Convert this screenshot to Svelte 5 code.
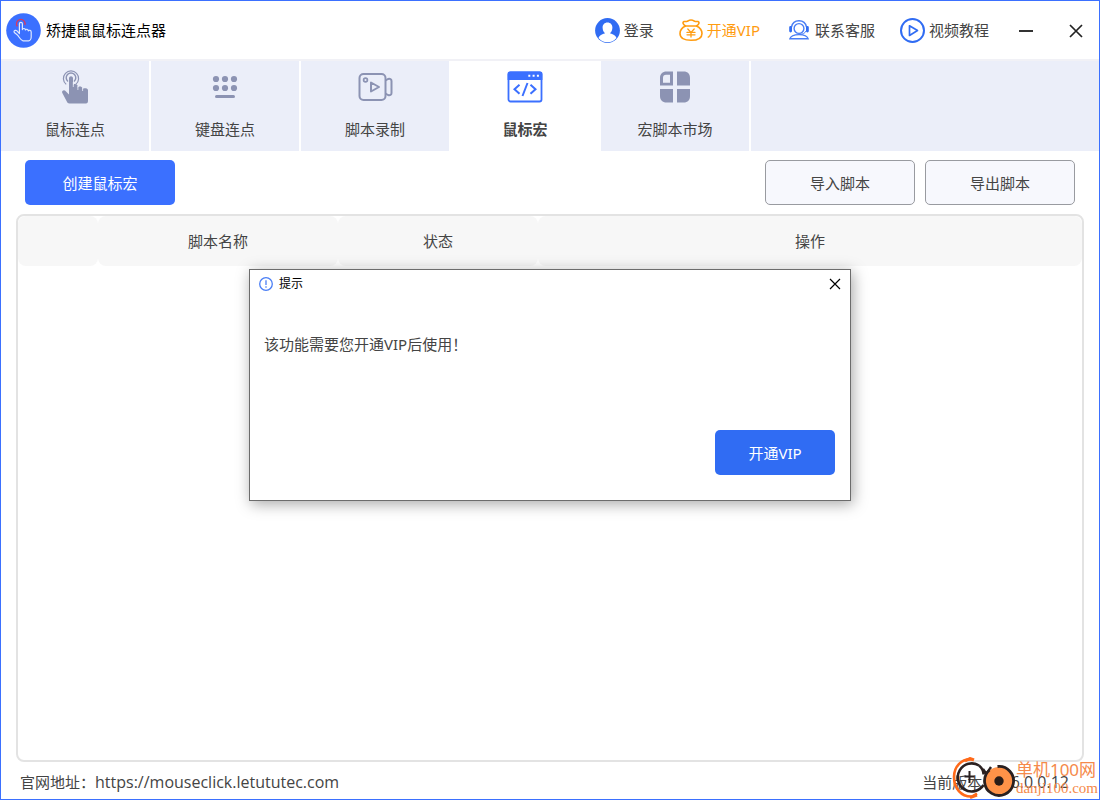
<script>
	const tabs = [
		{ id: 'click', label: '鼠标连点' },
		{ id: 'keyboard', label: '键盘连点' },
		{ id: 'record', label: '脚本录制' },
		{ id: 'macro', label: '鼠标宏' },
		{ id: 'market', label: '宏脚本市场' }
	];

	let active = $state('macro');
	let showDialog = $state(true);

	function requireVip() {
		showDialog = true;
	}

	function closeDialog() {
		showDialog = false;
	}
</script>

<div class="window">
	<header>
		<div class="brand">
			<svg width="35" height="35" viewBox="0 0 35 35" fill="none" aria-hidden="true">
				<circle cx="17.5" cy="17.5" r="17.3" fill="#3b70ff" />
				<path
					d="M13.4 20.6V10.8c0-2 3-2 3 0v5.8c.3-1.6 2.9-1.5 3 .4.5-1.2 2.8-.9 2.9.8.7-1 2.900-.5 2.900 1.100v5.200c0 1.600-1 3.700-2.600 3.700h-5.800c-2.200-.7-3.600-3.800-5.300-5.600-1.200-1.300-3.500-2.400-3.500-3.500 0-1.400 2-1.700 3-.8z"
					stroke="#dfe8ff"
					stroke-width="1.2"
					stroke-linejoin="round"
				/>
				<path d="M11.4 13.4A4.300 4.300 0 1 1 18.900 12" stroke="#d8395f" stroke-width="1.3" />
			</svg>
			<h1>矫捷鼠鼠标连点器</h1>
		</div>

		<nav class="links">
			<button class="link login">
				<svg width="25" height="25" viewBox="0 0 25 25" aria-hidden="true">
					<circle cx="12.5" cy="12.5" r="12.4" fill="#306cf3" />
					<path
						d="M12.5 4.4c-3 0-4.9 2.2-4.9 5.1 0 2.5 1 4.6 2.5 5.800-3 .8-5.800 2.400-6.600 4.700 2 2.800 5.500 4.200 9 4.200s7-1.400 9-4.200c-.8-2.300-3.600-3.900-6.600-4.700 1.500-1.200 2.500-3.300 2.500-5.800 0-2.900-1.900-5.100-4.900-5.100z"
						fill="#fff"
					/>
				</svg>
				登录
			</button>
			<button class="link vip" onclick={requireVip}>
				<svg width="24" height="24" viewBox="0 0 24 24" fill="none" stroke="#ff9c10" stroke-width="1.6" stroke-linecap="round" stroke-linejoin="round" aria-hidden="true">
					<path d="M6.500 8C4 6.500 3.200 4.200 5 3.600c1.200-.4 2 .3 3-.2C9.300 2.700 10.400 2 12 2s2.700.7 4 1.400c1 .5 1.800-.2 3 .2 1.800.6 1 2.900-1.500 4.400" />
					<path d="M6.500 8h11C20.500 9.500 23 12 23 15.400c0 4.600-4.200 6.800-11 6.800s-11-2.200-11-6.800C1 12 3.500 9.500 6.500 8z" />
					<path d="M8.800 11l3.200 3.400 3.200-3.400M12 14.400v4.600M8 14.400h8M8 16.800h8" stroke-width="1.300" />
				</svg>
				开通VIP
			</button>
			<button class="link support">
				<svg width="20" height="20" viewBox="0 0 20 20" fill="none" stroke="#4a7ef5" stroke-width="1.400" aria-hidden="true">
					<path d="M2.500 7C3.300 3 6 .8 10 .8S16.700 3 17.500 7" />
					<circle cx="10" cy="8.500" r="4.900" />
					<path d="M.9 18.800c.7-2.600 3.900-4.200 9.100-4.200s8.400 1.600 9.100 4.200z" />
					<path d="M17 11c-1.200 2.500-3.500 3.500-7 3.500" stroke-width="1" />
					<path d="M1.600 7.300v3.700M18.400 7.300v3.700" stroke-width="2.800" stroke="#306cf3" stroke-linecap="round" />
				</svg>
				联系客服
			</button>
			<button class="link video">
				<svg width="25" height="25" viewBox="0 0 25 25" fill="none" stroke="#306cf3" stroke-width="2" stroke-linejoin="round" aria-hidden="true">
					<circle cx="12.500" cy="12.500" r="11.500" />
					<path d="M9.500 7.800v9.600l8-4.800z" stroke-width="1.700" />
				</svg>
				视频教程
			</button>
		</nav>

		<div class="window-buttons">
			<button class="bare" aria-label="最小化">
				<svg width="16" height="16" viewBox="0 0 16 16" aria-hidden="true">
					<path d="M1 9h14" stroke="#333" stroke-width="2" />
				</svg>
			</button>
			<button class="bare" aria-label="关闭">
				<svg width="16" height="16" viewBox="0 0 16 16" aria-hidden="true">
					<path d="M2 3l12 12M14 3L2 15" stroke="#222" stroke-width="1.700" />
				</svg>
			</button>
		</div>
	</header>

	<div class="tabs" role="tablist">
		{#each tabs as tab (tab.id)}
			<button
				class="tab"
				class:active={active === tab.id}
				role="tab"
				aria-selected={active === tab.id}
				onclick={() => (active = tab.id)}
			>
				{@render TabIcon(tab.id)}
				<span>{tab.label}</span>
			</button>
		{/each}
		<div class="tabs-rest"></div>
	</div>

	<main>
		<div class="toolbar">
			<button class="btn primary" onclick={requireVip}>创建鼠标宏</button>
			<div class="toolbar-right">
				<button class="btn">导入脚本</button>
				<button class="btn">导出脚本</button>
			</div>
		</div>

		<div class="table-box">
			<table>
				<thead>
					<tr>
						<th class="col-check" aria-label="选择"></th>
						<th class="col-name">脚本名称</th>
						<th class="col-state">状态</th>
						<th>操作</th>
					</tr>
				</thead>
				<tbody></tbody>
			</table>
		</div>
	</main>

	<footer>
		<span>官网地址：<a class="latin" href="https://mouseclick.letututec.com">https://mouseclick.letututec.com</a></span>
		<span>当前版本： <span class="latin">V6.0.0.12</span></span>
	</footer>

	<div class="watermark">
		<svg width="64" height="42" viewBox="0 0 64 42" fill="none" aria-hidden="true">
			<path d="M20 2.500C9 1.500 2 10 2 20c0 11 7 20 18 19.500l5-3" stroke="#ff6a1a" stroke-width="2.600" />
			<path d="M13 4l5-2.500 4 1.500M18 40.500l7-2.500" stroke="#ff6a1a" stroke-width="3" />
			<path d="M27 8.500A14 14 0 1 0 31.500 28" stroke="#2a2020" stroke-width="2.600" />
			<path d="M17.500 14v12M12.500 19.500h10" stroke="#2a2020" stroke-width="2" />
			<path d="M27 8.500c3 2.500 4.500 5.500 4.500 9M31 12l3.500 5 4.500-7" stroke="#2a2020" stroke-width="2.400" />
			<circle cx="47" cy="24" r="14" fill="#ff9248" />
			<path d="M37.500 13a14.500 14.500 0 1 0 8-3.500" stroke="#2a2020" stroke-width="2.800" />
			<circle cx="47" cy="24" r="4.700" fill="#2a1c18" />
		</svg>
		<div class="watermark-text">
			<span class="name">单机100网</span>
			<span class="site">danji100.com</span>
		</div>
	</div>

	{#if showDialog}
		<div class="overlay">
			<div class="dialog" role="dialog" aria-labelledby="dialog-title">
				<div class="dialog-head">
					<svg width="14" height="14" viewBox="0 0 14 14" fill="none" stroke="#4a7ef5" stroke-width="1.300" aria-hidden="true">
						<circle cx="7" cy="7" r="6.300" />
						<path d="M7 3.300v4.700M7 9.200v1.500" />
					</svg>
					<h2 id="dialog-title">提示</h2>
					<button class="bare" aria-label="关闭提示" onclick={closeDialog}>
						<svg width="12" height="12" viewBox="0 0 12 12" aria-hidden="true">
							<path d="M1 1l10 10M11 1L1 11" stroke="#000" stroke-width="1.200" />
						</svg>
					</button>
				</div>
				<p>该功能需要您开通VIP后使用！</p>
				<div class="dialog-foot">
					<button class="btn confirm">开通VIP</button>
				</div>
			</div>
		</div>
	{/if}
</div>

{#snippet TabIcon(id)}
	<svg class="tab-icon" width="36" height="36" viewBox="0 0 36 36" fill="none" aria-hidden="true">
		{#if id === 'click'}
			<g stroke="#8c93b3" stroke-width="1.200">
				<path d="M9.200 15.400A7.600 7.600 0 1 1 18.800 15.400" />
				<path d="M11 12.500A4.800 4.800 0 1 1 17 12.500" stroke-width="1.400" />
			</g>
			<path
				d="M12 25.500V9.200c0-2.700 4-2.700 4 0v7.300c0-2.200 4.500-2.200 4.700.5v2c.2-2.200 4.500-2.200 4.700.3v1.500c.3-2 5.600-2 5.600.5v10.200c0 2.200-.6 3-2 3H12.500c-1.500 0-2.200-.8-2.700-2L5.200 23.800c-.8-2.200 2-3.500 3.300-1.900z"
				fill="#8c93b3"
			/>
			<path d="M16.300 13v5M20.900 17v4M25.600 19v3" stroke="#ebeef9" stroke-width=".8" />
		{:else if id === 'keyboard'}
			<g fill="#8c93b3">
				<circle cx="9" cy="10" r="3.100" />
				<circle cx="18" cy="10" r="3.100" />
				<circle cx="27" cy="10" r="3.100" />
				<circle cx="9" cy="19" r="3.100" />
				<circle cx="18" cy="19" r="3.100" />
				<circle cx="27" cy="19" r="3.100" />
				<rect x="8" y="26" width="20" height="3" rx="1.500" />
			</g>
		{:else if id === 'record'}
			<g stroke="#8c93b3" stroke-width="2" stroke-linejoin="round">
				<rect x="2.500" y="5" width="26" height="26" rx="4" />
				<path d="M28.500 11.500l2.500-1.500c2-.6 3.500 0 3.500 2v12c0 2-1.500 2.600-3.500 2l-2.500-1.500" />
				<circle cx="8.500" cy="11" r="1.900" stroke-width="1.700" />
				<path d="M14 13.500v9l8-4.500z" />
			</g>
		{:else if id === 'macro'}
			<rect x="1.500" y="3.500" width="33" height="29" rx="2" stroke="#3b70ff" stroke-width="1.800" />
			<path d="M.6 11V5c0-1.600.9-2.400 2.400-2.400h30c1.500 0 2.400.8 2.400 2.400v6z" fill="#3b70ff" />
			<path d="M21.300 6.800h2M25.600 6.800h2M29.900 6.800h2" stroke="#fff" stroke-width="2" />
			<path d="M12.500 15.800l-5 4.400 5 4.600M23.500 15.800l5 4.400-5 4.600M20.500 14l-5 13" stroke="#3b70ff" stroke-width="2" />
		{:else}
			<path
				fill-rule="evenodd"
				d="M9.500 2.500H16V16.500H3V9c0-4 2.500-6.500 6.500-6.500zM9 5.700C7 5.700 6 6.700 6 8.700v5h7v-8z"
				fill="#8c93b3"
			/>
			<path d="M20 2.500h6.500C31 2.500 33 5 33 9v7.500H20zM3 20h13v13.500H9.500C5.500 33.500 3 31 3 27zM20 20h13v7c0 4-2 6.500-6.500 6.500H20z" fill="#8c93b3" />
		{/if}
	</svg>
{/snippet}

<style>
	:global(body) {
		margin: 0;
	}

	.window {
		position: relative;
		box-sizing: border-box;
		display: flex;
		flex-direction: column;
		min-height: 100vh;
		border: 1px solid #3b70ff;
		background: #fff;
		color: #444;
		font-family: 'Noto Sans', 'Noto Sans CJK SC', sans-serif;
		font-size: 15px;
		line-height: 20px;
	}

	button {
		padding: 0;
		border: none;
		background: none;
		color: inherit;
		font: inherit;
		cursor: pointer;
	}

	svg {
		display: block;
		flex-shrink: 0;
	}

	header {
		display: flex;
		align-items: center;
		height: 58px;
		padding: 0 15px 0 5px;
		border-bottom: 2px solid #f1f1f6;
	}

	.brand {
		display: flex;
		align-items: center;
		gap: 5px;
		margin-right: auto;
	}

	h1 {
		margin: 0;
		color: #000;
		font-size: 15px;
		font-weight: 400;
	}

	.links {
		display: flex;
		align-items: center;
		gap: 25px;
	}

	.link {
		display: flex;
		align-items: center;
		gap: 4px;
		white-space: nowrap;
	}

	.vip {
		color: #ff9c10;
	}

	.support {
		gap: 6px;
		margin-left: 4px;
	}

	.window-buttons {
		display: flex;
		gap: 34px;
		margin-left: 29px;
	}

	.tabs {
		display: flex;
		gap: 2px;
		height: 90px;
	}

	.tab {
		display: flex;
		flex-direction: column;
		align-items: center;
		gap: 14px;
		box-sizing: border-box;
		width: 148px;
		padding-top: 8px;
		background: #ebeef9;
	}

	.tab.active {
		background: #fff;
		font-weight: 700;
	}

	.tabs-rest {
		flex: 1;
		background: #ebeef9;
	}

	main {
		display: flex;
		flex: 1;
		flex-direction: column;
		gap: 9px;
		padding: 9px 15px 0;
	}

	.toolbar {
		display: flex;
		justify-content: space-between;
		padding: 0 9px;
	}

	.toolbar-right {
		display: flex;
		gap: 10px;
	}

	.btn {
		box-sizing: border-box;
		width: 150px;
		height: 45px;
		border: 1px solid #999ba0;
		border-radius: 5px;
		background: #f7f8fd;
	}

	.btn.primary {
		border: none;
		background: #3b70ff;
		color: #fff;
	}

	.table-box {
		flex: 1;
		border: 2px solid #e3e3e3;
		border-radius: 8px;
	}

	table {
		width: 100%;
		border-collapse: separate;
		border-spacing: 0;
		table-layout: fixed;
	}

	th {
		height: 50px;
		padding: 0;
		border-radius: 8px;
		background: #f7f7f7;
		font-weight: 400;
	}

	.col-check {
		width: 80px;
	}

	.col-name {
		width: 240px;
	}

	.col-state {
		width: 200px;
	}

	footer {
		display: flex;
		align-items: center;
		justify-content: space-between;
		height: 37px;
		padding: 2px 30px 0 19px;
		box-sizing: border-box;
	}

	footer a {
		color: inherit;
		text-decoration: none;
	}

	.latin {
		font-family: 'Open Sans', sans-serif;
		font-size: 16px;
	}

	.watermark {
		position: absolute;
		right: 1px;
		bottom: 0;
		display: flex;
		align-items: center;
		color: #f58a4b;
		pointer-events: none;
	}

	.watermark-text {
		display: flex;
		flex-direction: column;
	}

	.name {
		font-size: 17px;
		line-height: 20px;
	}

	.site {
		font-family: 'Liberation Serif', serif;
		font-size: 15px;
		line-height: 16px;
	}

	.overlay {
		position: absolute;
		inset: 0;
		display: flex;
		align-items: center;
		justify-content: center;
		padding-bottom: 30px;
	}

	.dialog {
		border: 1px solid #6c6c6c;
		width: 600px;
		max-width: 90%;
		background: #fff;
		box-shadow: 2px 3px 14px rgba(0, 0, 0, 0.35);
	}

	.dialog-head {
		display: flex;
		align-items: center;
		gap: 6px;
		height: 28px;
		padding: 0 9px;
	}

	h2 {
		flex: 1;
		margin: 0;
		color: #000;
		font-size: 12px;
		font-weight: 400;
	}

	.dialog p {
		margin: 0;
		padding: 36px 14px 76px;
	}

	.dialog-foot {
		display: flex;
		justify-content: flex-end;
		padding: 0 15px 25px;
	}

	.btn.confirm {
		width: 120px;
		border: none;
		background: #306cf3;
		color: #fff;
	}
</style>
